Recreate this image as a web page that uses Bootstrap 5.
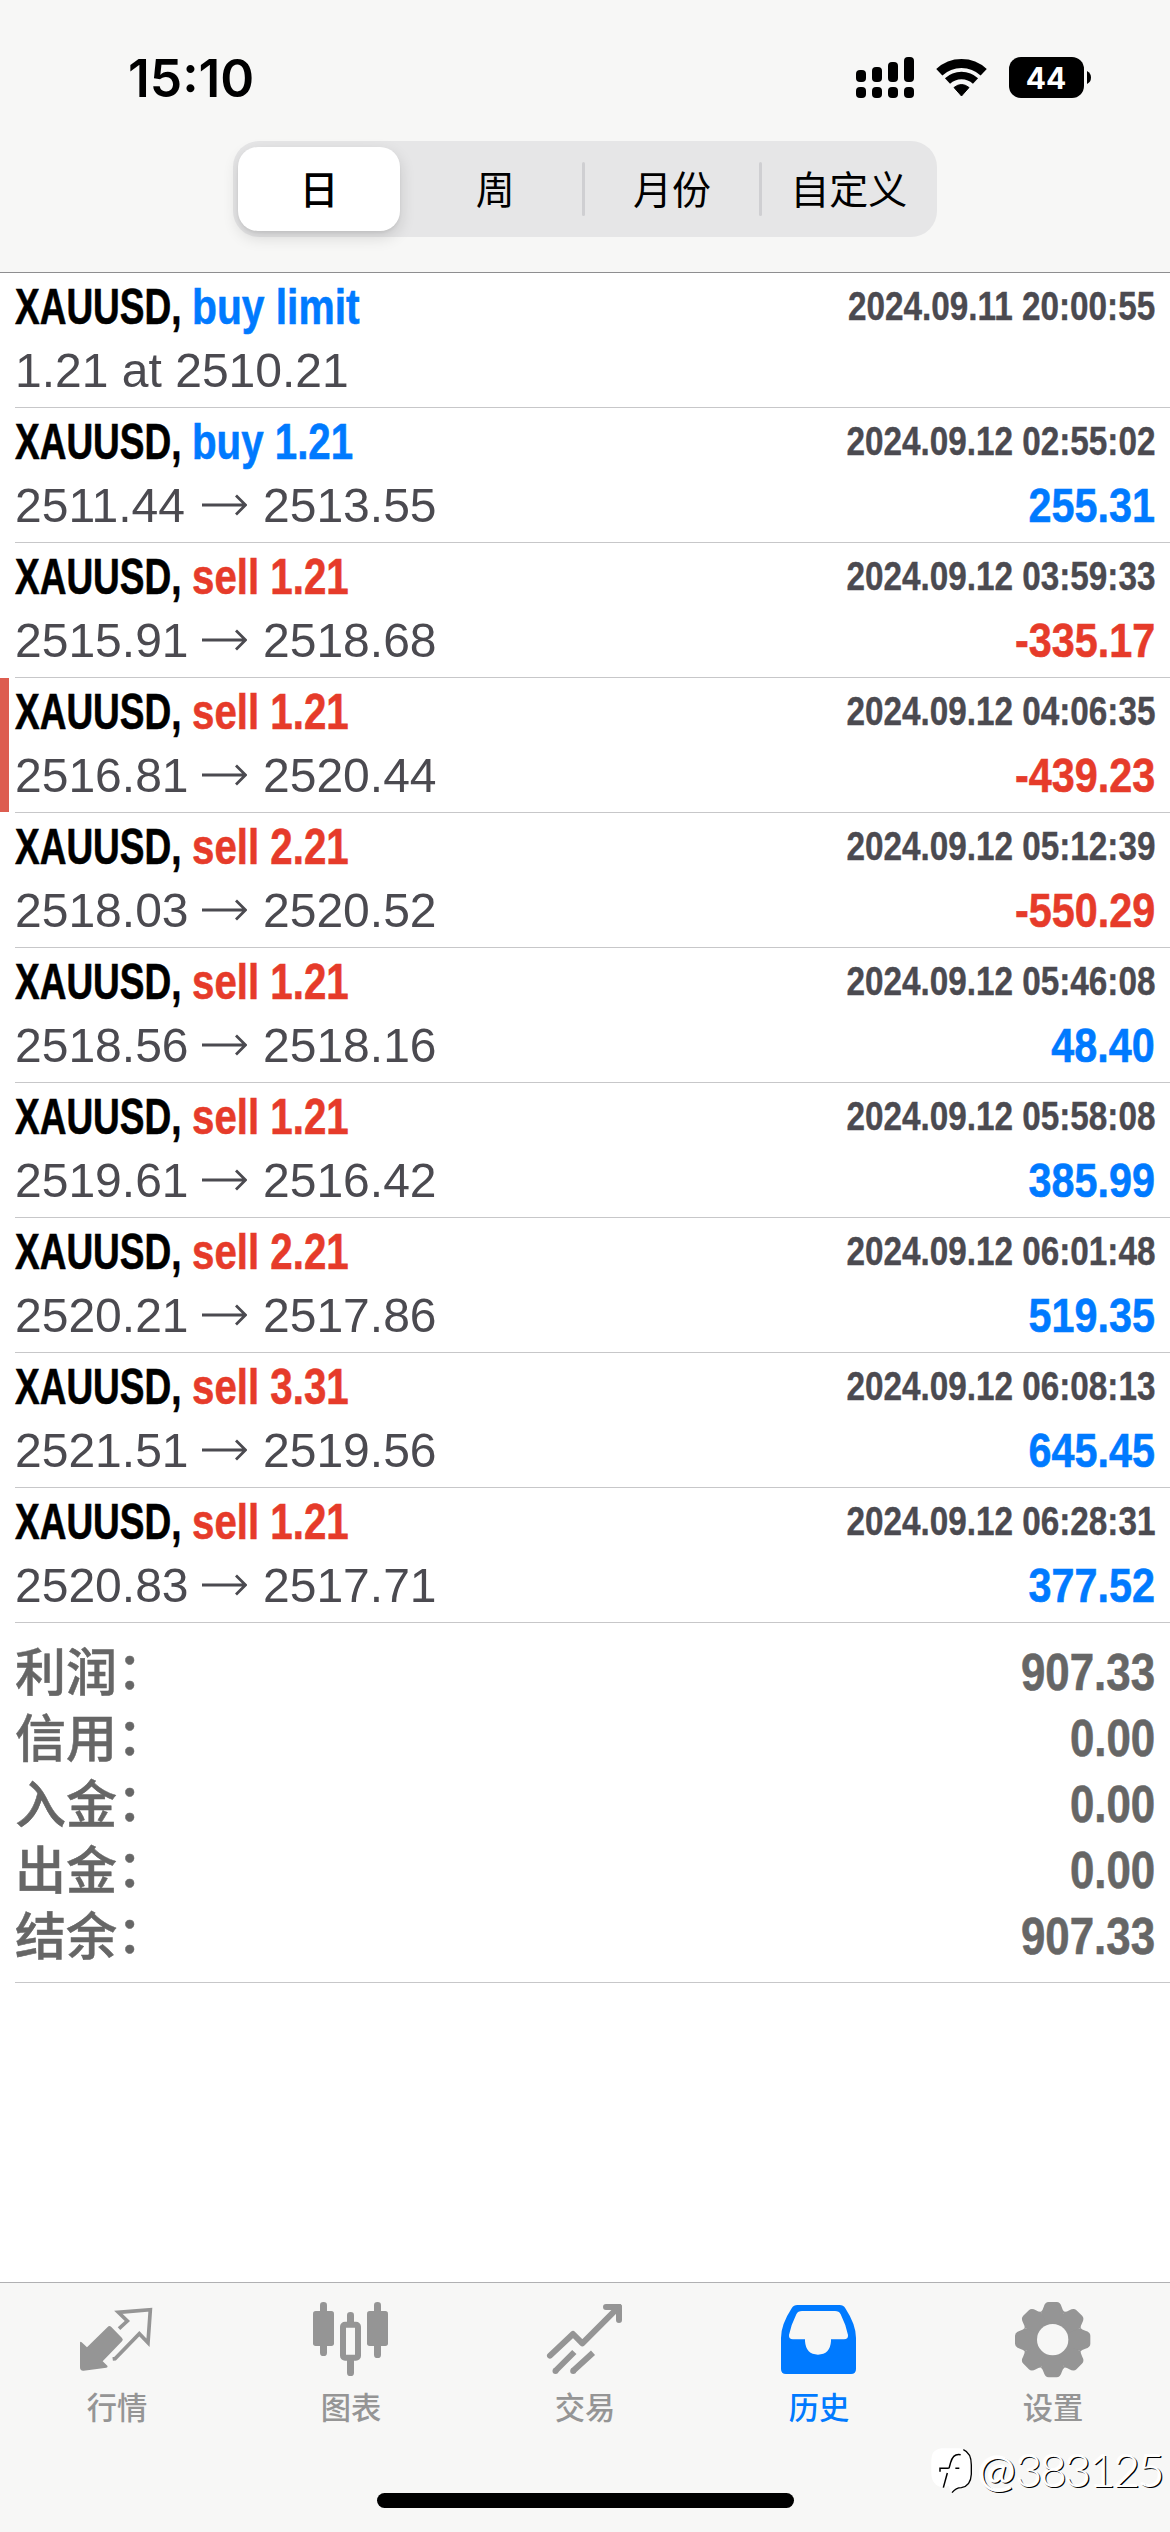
<!DOCTYPE html>
<html lang="zh-CN">
<head>
<meta charset="utf-8">
<meta name="viewport" content="width=device-width, initial-scale=1">
<title>历史</title>
<link href="https://cdn.jsdelivr.net/npm/bootstrap@5.3.0/dist/css/bootstrap.min.css" rel="stylesheet">
<style>
  :root { --blue: #007aff; --red: #e63b2a; --ink: #4b4a50; --chrome: #f7f7f6; --tab: #959595; }
  body { font-family: "Liberation Sans", "Noto Sans CJK SC", sans-serif; background: #fff; color: #000; }
  .screen { width: 1170px; height: 2532px; overflow: hidden; }
  .top-bar { height: 273px; background: var(--chrome); border-bottom: 1px solid #8e8e90; }
  .status { height: 141px; padding: 57px 78px 0 128px; }
  .clock { font: 600 51.5px/42px Inter, sans-serif; letter-spacing: 0; }
  .segments { width: 704px; height: 96px; border-radius: 26px; background: #e6e6e7; font: 400 39px/92px "Noto Sans CJK SC", sans-serif; }
  .seg { width: 177px; height: 96px; }
  .seg-on { width: 174px; padding: 6px 7px 6px 5px; font-weight: 500; line-height: 80px; }
  .seg-on span { height: 84px; background: #fff; border-radius: 20px; box-shadow: 0 6px 16px rgba(0,0,0,.14), 0 2px 3px rgba(0,0,0,.05); }
  .seg-rule { width: 3px; height: 54px; border-radius: 2px; background: #cfcfd2; margin: 0 -1.5px; }
  .deal { height: 135px; padding: 0 15px; position: relative; }
  .deal::after, .totals::after { content: ""; position: absolute; left: 15px; right: 0; bottom: 0; height: 1px; background: #c7c7c9; }
  .deal-flag::before { content: ""; position: absolute; left: 0; top: 0; width: 9px; height: 134px; background: #dd5d50; }
  .line-a { height: 67px; line-height: 69px; font-size: 50px; font-weight: 700; white-space: nowrap; }
  .line-b { height: 60px; line-height: 60px; font-size: 49px; white-space: nowrap; color: var(--ink); }
  .sym, .side, .price { display: inline-block; transform-origin: 0 50%; }
  .sym, .side, .gain, .sum { -webkit-text-stroke: .6px currentColor; }
  .when { -webkit-text-stroke: .4px currentColor; }
  .sym { width: 176.500px; transform: scaleX(.74); }
  .side { transform: scaleX(.805); }
  .side-wide { transform: scaleX(.815); }
  .buy { color: var(--blue); } .sell { color: var(--red); }
  .when { font-size: 40px; line-height: 66px; color: var(--ink); transform: scaleX(.832); transform-origin: 100% 50%; }
  .gain, .sum { font-weight: 700; transform: scaleX(.843); transform-origin: 100% 50%; }
  .price { transform: scaleX(.98); }
  .from { width: 187px; }
  .arrow { width: 45px; height: 22px; margin-right: 16px; }
  .totals { height: 360px; padding: 16px 15px 0; position: relative; color: #666; }
  .totals > div { height: 66px; line-height: 66px; }
  .tag { font: 500 51px/61px "Noto Sans CJK SC", sans-serif; -webkit-text-stroke: .5px currentColor; }
  .tag i { font-style: normal; display: inline-block; transform: translate(0, -2px); }
  .sum { font-size: 52px; }
  .tab-bar { height: 250px; background: var(--chrome); border-top: 1px solid #b0b0b2; color: var(--tab); }
  .tab { width: 234px; padding-top: 15px; font: 500 30.3px/40px "Noto Sans CJK SC", sans-serif; }
  .tab svg { width: 80px; height: 80px; margin-bottom: 8px; }
  .tab-on { color: var(--blue); }
  .home { width: 417px; height: 15px; border-radius: 8px; background: #000; margin-bottom: 24px; }
  .stamp { position: absolute; left: 930px; top: 2443px; height: 54px; color: #fff; font: 300 46px/48px Lato, sans-serif; text-shadow: 1.2px 1.2px .5px #000, -1px -1px 1px #fff; }
  .stamp .at { font-size: 45px; font-weight: 400; margin-left: 4px; }
  .stamp .digits { letter-spacing: -2.2px; margin-left: 0; }
</style>
</head>
<body>
<div class="screen position-relative d-flex flex-column">
  <header class="top-bar d-flex flex-column align-items-center flex-shrink-0">
    <div class="status d-flex justify-content-between w-100">
      <div class="clock">15:10</div>
      <svg width="237" height="41" viewBox="855 57 237 41">
        <g>
          <rect x="856" y="70" width="10" height="12" rx="4"/><rect x="872" y="67" width="10" height="15" rx="4"/><rect x="888" y="62" width="10" height="20" rx="4"/><rect x="904" y="57" width="10" height="25" rx="4"/>
          <rect x="856" y="87" width="10" height="11" rx="4"/><rect x="872" y="87" width="10" height="11" rx="4"/><rect x="888" y="87" width="10" height="11" rx="4"/><rect x="904" y="87" width="10" height="11" rx="4"/>
        </g>
        <g fill="none" stroke="#000">
          <path stroke-width="9" d="M939.3 72.2A32.5 32.5 0 0 1 983.7 72.2"/>
          <path stroke-width="7.5" d="M947.5 81A20.5 20.5 0 0 1 975.5 81"/>
        </g>
        <path d="M961.5 96L954 87.5Q961.5 81.5 969 87.5Z" stroke="#000" stroke-width="1" stroke-linejoin="round"/>
        <rect x="1009" y="57" width="75" height="41" rx="12"/>
        <path d="M1087 71Q1091 73 1091 77.5T1087 84Z"/>
        <text x="1046" y="89" fill="#fff" text-anchor="middle" font-family="Inter, sans-serif" font-weight="700" font-size="30">44</text>
      </svg>
    </div>
    <div class="segments d-flex align-items-center text-center">
      <div class="seg-on"><span class="d-block">日</span></div>
      <div class="seg">周</div>
      <div class="seg-rule"></div>
      <div class="seg">月份</div>
      <div class="seg-rule"></div>
      <div class="seg">自定义</div>
    </div>
  </header>

  <main class="flex-grow-1">
    <svg class="d-none"><symbol id="to" viewBox="0 0 45 22"><path d="M0 11H43M34 1.5L43.5 11L34 20.5" fill="none" stroke="#4b4a50" stroke-width="2.8"/></symbol></svg>
    <div class="deal">
      <div class="line-a d-flex"><span class="sym">XAUUSD,</span><span class="side side-wide buy">buy limit</span><span class="when ms-auto">2024.09.11 20:00:55</span></div>
      <div class="line-b d-flex"><span class="price">1.21 at 2510.21</span></div>
    </div>
    <div class="deal">
      <div class="line-a d-flex"><span class="sym">XAUUSD,</span><span class="side buy">buy 1.21</span><span class="when ms-auto">2024.09.12 02:55:02</span></div>
      <div class="line-b d-flex align-items-center"><span class="price from">2511.44</span><svg class="arrow"><use href="#to"/></svg><span class="price">2513.55</span><span class="gain buy ms-auto">255.31</span></div>
    </div>
    <div class="deal">
      <div class="line-a d-flex"><span class="sym">XAUUSD,</span><span class="side sell">sell 1.21</span><span class="when ms-auto">2024.09.12 03:59:33</span></div>
      <div class="line-b d-flex align-items-center"><span class="price from">2515.91</span><svg class="arrow"><use href="#to"/></svg><span class="price">2518.68</span><span class="gain sell ms-auto">-335.17</span></div>
    </div>
    <div class="deal deal-flag">
      <div class="line-a d-flex"><span class="sym">XAUUSD,</span><span class="side sell">sell 1.21</span><span class="when ms-auto">2024.09.12 04:06:35</span></div>
      <div class="line-b d-flex align-items-center"><span class="price from">2516.81</span><svg class="arrow"><use href="#to"/></svg><span class="price">2520.44</span><span class="gain sell ms-auto">-439.23</span></div>
    </div>
    <div class="deal">
      <div class="line-a d-flex"><span class="sym">XAUUSD,</span><span class="side sell">sell 2.21</span><span class="when ms-auto">2024.09.12 05:12:39</span></div>
      <div class="line-b d-flex align-items-center"><span class="price from">2518.03</span><svg class="arrow"><use href="#to"/></svg><span class="price">2520.52</span><span class="gain sell ms-auto">-550.29</span></div>
    </div>
    <div class="deal">
      <div class="line-a d-flex"><span class="sym">XAUUSD,</span><span class="side sell">sell 1.21</span><span class="when ms-auto">2024.09.12 05:46:08</span></div>
      <div class="line-b d-flex align-items-center"><span class="price from">2518.56</span><svg class="arrow"><use href="#to"/></svg><span class="price">2518.16</span><span class="gain buy ms-auto">48.40</span></div>
    </div>
    <div class="deal">
      <div class="line-a d-flex"><span class="sym">XAUUSD,</span><span class="side sell">sell 1.21</span><span class="when ms-auto">2024.09.12 05:58:08</span></div>
      <div class="line-b d-flex align-items-center"><span class="price from">2519.61</span><svg class="arrow"><use href="#to"/></svg><span class="price">2516.42</span><span class="gain buy ms-auto">385.99</span></div>
    </div>
    <div class="deal">
      <div class="line-a d-flex"><span class="sym">XAUUSD,</span><span class="side sell">sell 2.21</span><span class="when ms-auto">2024.09.12 06:01:48</span></div>
      <div class="line-b d-flex align-items-center"><span class="price from">2520.21</span><svg class="arrow"><use href="#to"/></svg><span class="price">2517.86</span><span class="gain buy ms-auto">519.35</span></div>
    </div>
    <div class="deal">
      <div class="line-a d-flex"><span class="sym">XAUUSD,</span><span class="side sell">sell 3.31</span><span class="when ms-auto">2024.09.12 06:08:13</span></div>
      <div class="line-b d-flex align-items-center"><span class="price from">2521.51</span><svg class="arrow"><use href="#to"/></svg><span class="price">2519.56</span><span class="gain buy ms-auto">645.45</span></div>
    </div>
    <div class="deal">
      <div class="line-a d-flex"><span class="sym">XAUUSD,</span><span class="side sell">sell 1.21</span><span class="when ms-auto">2024.09.12 06:28:31</span></div>
      <div class="line-b d-flex align-items-center"><span class="price from">2520.83</span><svg class="arrow"><use href="#to"/></svg><span class="price">2517.71</span><span class="gain buy ms-auto">377.52</span></div>
    </div>
    <div class="totals">
      <div class="d-flex justify-content-between"><span class="tag">利润<i>：</i></span><span class="sum">907.33</span></div>
      <div class="d-flex justify-content-between"><span class="tag">信用<i>：</i></span><span class="sum">0.00</span></div>
      <div class="d-flex justify-content-between"><span class="tag">入金<i>：</i></span><span class="sum">0.00</span></div>
      <div class="d-flex justify-content-between"><span class="tag">出金<i>：</i></span><span class="sum">0.00</span></div>
      <div class="d-flex justify-content-between"><span class="tag">结余<i>：</i></span><span class="sum">907.33</span></div>
    </div>
  </main>

  <footer class="tab-bar d-flex flex-column align-items-center justify-content-between flex-shrink-0">
    <nav class="d-flex">
      <div class="tab d-flex flex-column align-items-center">
        <svg viewBox="111 84 240 240" fill="currentColor">
          <path d="M120 219Q120 213 125 217L141 232L203 171Q208 165 214 171L246 204Q251 209 246 214L188 274L202 287Q205 291 199 293L131 302Q120 303 120 292Z"/>
          <path d="M237 176L262 153L235 127L331 119L324 218L298 191L225 266L218 267" fill="none" stroke="currentColor" stroke-width="11"/>
        </svg>行情
      </div>
      <div class="tab d-flex flex-column align-items-center">
        <svg viewBox="813 84 240 240" fill="currentColor">
          <rect x="840" y="96" width="21" height="162" rx="10"/><rect x="819" y="123" width="63" height="105" rx="8"/>
          <rect x="1002" y="96" width="21" height="168" rx="10"/><rect x="981" y="123" width="63" height="105" rx="8"/>
          <rect x="921" y="126" width="21" height="45" rx="10"/><rect x="921" y="260" width="21" height="58" rx="10"/>
          <rect x="909" y="164.500" width="45" height="99" rx="6" fill="none" stroke="currentColor" stroke-width="18"/>
        </svg>图表
      </div>
      <div class="tab d-flex flex-column align-items-center">
        <svg viewBox="135 84 240 240" fill="none" stroke="currentColor" stroke-width="18">
          <path d="M150 257L219 192L247 220L354 113M318 111H357V150" stroke-linecap="round" stroke-linejoin="round"/>
          <path d="M356 102H362L366 108V114L350 126Z" fill="currentColor" stroke="none"/>
          <path d="M166 303L223 246M219 303L279 248"/>
          <circle cx="166.500" cy="303" r="9" fill="currentColor" stroke="none"/><circle cx="219.500" cy="303" r="9" fill="currentColor" stroke="none"/>
        </svg>交易
      </div>
      <div class="tab tab-on d-flex flex-column align-items-center">
        <svg viewBox="837 84 240 240" fill="currentColor" fill-rule="evenodd">
          <path d="M892 105H1019Q1030 105 1036 115Q1068 164 1068 204V297Q1068 312 1053 312H858Q843 312 843 297V204Q843 164 875 115Q881 105 892 105ZM906 123Q894 123 889 133Q873 165 867 195Q866 208 879 208H915V214Q918 254 954 254Q990 254 993 214V208H1032Q1045 208 1044 195Q1038 165 1022 133Q1017 123 1005 123Z"/>
        </svg>历史
      </div>
      <div class="tab d-flex flex-column align-items-center">
        <svg viewBox="399 84 240 240" fill="currentColor">
          <symbol id="tooth" overflow="visible"><path d="M-35 -84Q-30 -87 -27 -98Q-23 -113 -12 -113H12Q23 -113 27 -98Q30 -87 35 -84L0 2Z"/></symbol>
          <g transform="translate(518 209)">
            <circle r="84"/>
            <use href="#tooth"/><use href="#tooth" transform="rotate(45)"/><use href="#tooth" transform="rotate(90)"/><use href="#tooth" transform="rotate(135)"/>
            <use href="#tooth" transform="rotate(180)"/><use href="#tooth" transform="rotate(225)"/><use href="#tooth" transform="rotate(270)"/><use href="#tooth" transform="rotate(315)"/>
            <circle r="47" fill="#f7f7f6"/>
          </g>
        </svg>设置
      </div>
    </nav>
    <div class="home"></div>
  </footer>

  <div class="stamp d-flex align-items-center">
    <svg width="44" height="50" viewBox="0 0 132 150">
      <path d="M34 10H88Q122 16 122 60V88Q120 122 92 126Q74 128 64 144L56 122L40 128Q4 122 4 84V44Q4 14 34 10Z" fill="#fff"/>
      <path d="M100 14Q124 24 124 60V88Q122 124 94 128Q78 128 66 143" fill="none" stroke="#000" stroke-width="4"/>
      <path d="M92 29Q70 24 62 52L57 70M52 84L40 128M30 80V70H56M76 70H88" fill="none" stroke="#000" stroke-width="4.500"/>
    </svg>
    <span class="at">@</span><span class="digits">383125</span>
  </div>
</div>
<script src="https://cdn.jsdelivr.net/npm/bootstrap@5.3.0/dist/js/bootstrap.bundle.min.js"></script>
</body>
</html>
